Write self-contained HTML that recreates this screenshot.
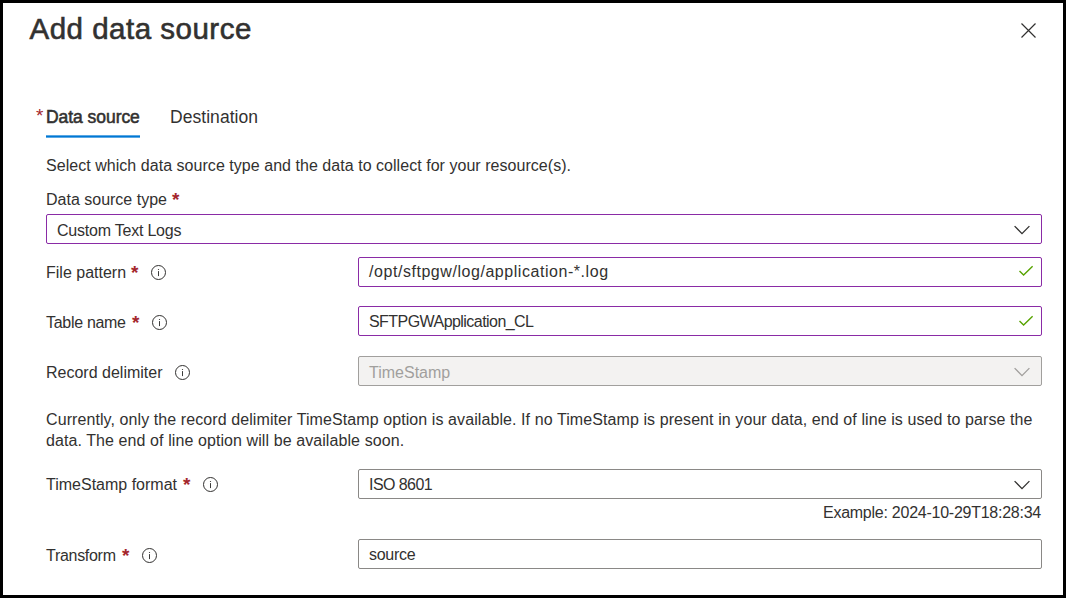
<!DOCTYPE html>
<html>
<head>
<meta charset="utf-8">
<style>
html,body{margin:0;padding:0;}
body{width:1066px;height:598px;overflow:hidden;background:#000;position:relative;font-family:"Liberation Sans",sans-serif;color:#323130;}
#panel{position:absolute;left:3px;top:3px;width:1060px;height:592px;background:#fff;}
.t{position:absolute;white-space:nowrap;font-size:16px;line-height:20px;}
.s{position:absolute;white-space:nowrap;font-size:19px;line-height:20px;color:#a4262c;font-weight:bold;}
.box{position:absolute;box-sizing:border-box;height:30px;border:1px solid #8a2ba6;border-radius:2px;background:#fff;}
.box.gray{border-color:#8a8886;}
.box.dis{border-color:#a19f9d;background:#f3f2f1;}
svg{position:absolute;overflow:visible;}
</style>
</head>
<body>
<div id="panel"></div>

<!-- title -->
<div class="t" style="left:29.5px;top:13px;font-size:29.5px;line-height:32px;letter-spacing:0.5px;-webkit-text-stroke:0.6px #323130;">Add data source</div>
<!-- close -->
<svg style="left:1021px;top:23px;" width="15" height="15" viewBox="0 0 15 15"><path d="M0.5 0.5 L14.5 14.5 M14.5 0.5 L0.5 14.5" stroke="#323130" stroke-width="1.2" fill="none"/></svg>

<!-- tabs -->
<div class="s" style="left:36px;top:106px;font-weight:normal;font-size:19px;">*</div>
<div class="t" style="left:46px;top:107px;font-size:17.5px;letter-spacing:-0.05px;-webkit-text-stroke:0.55px #323130;">Data source</div>
<div class="t" style="left:170px;top:107px;font-size:17.5px;letter-spacing:0.05px;">Destination</div>
<div style="position:absolute;left:46px;top:135px;width:94px;height:3px;background:linear-gradient(to bottom,#5aa7e3 0,#5aa7e3 1px,#0078d4 1px,#0078d4 2px,#5aa7e3 2px,#5aa7e3 3px);"></div>

<div class="t" style="left:46px;top:156px;letter-spacing:0.04px;">Select which data source type and the data to collect for your resource(s).</div>

<div class="t" style="left:46px;top:190px;">Data source type</div>
<div class="s" style="left:172px;top:190px;">*</div>
<div class="box" style="left:46px;top:214px;width:996px;"></div>
<div class="t" style="left:57px;top:221px;letter-spacing:-0.22px;">Custom Text Logs</div>
<svg style="left:1014px;top:226px;" width="16" height="8" viewBox="0 0 16 8"><path d="M0.6 0.1 L8 7.6 L15.4 0.1" stroke="#323130" stroke-width="1.3" fill="none"/></svg>

<div class="t" style="left:46px;top:263px;">File pattern</div>
<div class="s" style="left:131px;top:263px;">*</div>
<svg style="left:151px;top:265px;" width="15" height="15" viewBox="0 0 15 15"><circle cx="7.5" cy="7.5" r="7" stroke="#323130" stroke-width="1" fill="none"/><path d="M7.5 6.1 V11.1" stroke="#323130" stroke-width="0.95"/><circle cx="7.5" cy="4.5" r="0.62" fill="#323130"/></svg>
<div class="box" style="left:358px;top:257px;width:684px;"></div>
<div class="t" style="left:369px;top:262px;letter-spacing:0.55px;">/opt/sftpgw/log/application-*.log</div>
<svg style="left:1019px;top:266px;" width="14" height="10" viewBox="0 0 14 10"><path d="M0.5 5 L4.6 9 L13.6 0.3" stroke="#57a300" stroke-width="1.4" fill="none"/></svg>

<div class="t" style="left:46px;top:313px;letter-spacing:-0.3px;">Table name</div>
<div class="s" style="left:132px;top:313px;">*</div>
<svg style="left:152px;top:315px;" width="15" height="15" viewBox="0 0 15 15"><circle cx="7.5" cy="7.5" r="7" stroke="#323130" stroke-width="1" fill="none"/><path d="M7.5 6.1 V11.1" stroke="#323130" stroke-width="0.95"/><circle cx="7.5" cy="4.5" r="0.62" fill="#323130"/></svg>
<div class="box" style="left:358px;top:306px;width:684px;"></div>
<div class="t" style="left:369px;top:312px;letter-spacing:-0.55px;">SFTPGWApplication_CL</div>
<svg style="left:1019px;top:316px;" width="14" height="10" viewBox="0 0 14 10"><path d="M0.5 5 L4.6 9 L13.6 0.3" stroke="#57a300" stroke-width="1.4" fill="none"/></svg>

<div class="t" style="left:46px;top:363px;">Record delimiter</div>
<svg style="left:175px;top:365px;" width="15" height="15" viewBox="0 0 15 15"><circle cx="7.5" cy="7.5" r="7" stroke="#323130" stroke-width="1" fill="none"/><path d="M7.5 6.1 V11.1" stroke="#323130" stroke-width="0.95"/><circle cx="7.5" cy="4.5" r="0.62" fill="#323130"/></svg>
<div class="box dis" style="left:358px;top:356px;width:684px;"></div>
<div class="t" style="left:369px;top:363px;color:#a19f9d;">TimeStamp</div>
<svg style="left:1014px;top:368px;" width="16" height="8" viewBox="0 0 16 8"><path d="M0.6 0.1 L8 7.6 L15.4 0.1" stroke="#a19f9d" stroke-width="1.3" fill="none"/></svg>

<div class="t" style="left:46px;top:409px;line-height:21px;letter-spacing:0.086px;">Currently, only the record delimiter TimeStamp option is available. If no TimeStamp is present in your data, end of line is used to parse the<br>data. The end of line option will be available soon.</div>

<div class="t" style="left:46px;top:475px;">TimeStamp format</div>
<div class="s" style="left:183px;top:475px;">*</div>
<svg style="left:203px;top:477px;" width="15" height="15" viewBox="0 0 15 15"><circle cx="7.5" cy="7.5" r="7" stroke="#323130" stroke-width="1" fill="none"/><path d="M7.5 6.1 V11.1" stroke="#323130" stroke-width="0.95"/><circle cx="7.5" cy="4.5" r="0.62" fill="#323130"/></svg>
<div class="box gray" style="left:358px;top:469px;width:684px;"></div>
<div class="t" style="left:369px;top:475px;letter-spacing:-0.56px;">ISO 8601</div>
<svg style="left:1014px;top:481px;" width="16" height="8" viewBox="0 0 16 8"><path d="M0.6 0.1 L8 7.6 L15.4 0.1" stroke="#323130" stroke-width="1.3" fill="none"/></svg>
<div class="t" style="right:25px;top:503px;letter-spacing:-0.25px;">Example: 2024-10-29T18:28:34</div>

<div class="t" style="left:46px;top:546px;letter-spacing:-0.29px;">Transform</div>
<div class="s" style="left:122px;top:546px;">*</div>
<svg style="left:142px;top:548px;" width="15" height="15" viewBox="0 0 15 15"><circle cx="7.5" cy="7.5" r="7" stroke="#323130" stroke-width="1" fill="none"/><path d="M7.5 6.1 V11.1" stroke="#323130" stroke-width="0.95"/><circle cx="7.5" cy="4.5" r="0.62" fill="#323130"/></svg>
<div class="box gray" style="left:358px;top:539px;width:684px;"></div>
<div class="t" style="left:369px;top:545px;letter-spacing:-0.27px;">source</div>

</body>
</html>
